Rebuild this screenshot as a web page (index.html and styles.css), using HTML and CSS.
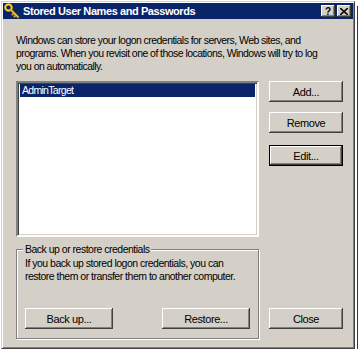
FILE: index.html
```html
<!DOCTYPE html>
<html lang="en">

<head>
    <meta charset="UTF-8">
    <meta name="viewport" content="width=device-width, initial-scale=1.0">
    <link rel="stylesheet" href="styles.css">
    <title>Stored User Names and Passwords</title>
</head>

<body>
    <div class="window">
        <div class="titlebar">
            <svg class="key" width="16" height="16" viewBox="0 0 16 16">
                <circle cx="4.5" cy="4.5" r="3.2" fill="none" stroke="#c89a10" stroke-width="2.2" />
                <circle cx="4.5" cy="4.5" r="3.2" fill="none" stroke="#f7d64a" stroke-width="1.2" />
                <path d="M6.8 6.8 L14 14 M10 10 L8.6 11.4 M12 12 L10.6 13.4" stroke="#d4a514" stroke-width="2" stroke-linecap="square" />
                <path d="M6.8 6.8 L14 14" stroke="#f7d64a" stroke-width="0.9" />
            </svg>
            <span class="title">Stored User Names and Passwords</span>
            <div class="caption-btns">
                <span class="cap-btn">?</span>
                <span class="cap-btn">
                    <svg width="8" height="7" viewBox="0 0 8 7">
                        <path d="M0 0 L8 7 M8 0 L0 7" stroke="#000" stroke-width="1.6" />
                    </svg>
                </span>
            </div>
        </div>

        <div class="content">
            <p class="intro">Windows can store your logon credentials for servers, Web sites, and<br>
                programs. When you revisit one of those locations, Windows will try to log<br>
                you on automatically.</p>

            <div class="main">
                <div class="left">
                    <div class="listbox">
                        <div class="item selected">AdminTarget</div>
                    </div>

                    <div class="group">
                        <span class="legend">Back up or restore credentials</span>
                        <p class="group-text">If you back up stored logon credentials, you can<br>
                            restore them or transfer them to another computer.</p>
                        <div class="group-btns">
                            <button class="btn">Back up...</button>
                            <button class="btn">Restore...</button>
                        </div>
                    </div>
                </div>

                <div class="right">
                    <button class="btn">Add...</button>
                    <button class="btn">Remove</button>
                    <button class="btn default">Edit...</button>
                    <button class="btn close">Close</button>
                </div>
            </div>
        </div>
    </div>
</body>

</html>
```

FILE: styles.css
```css
body {
    margin: 0;
    background: #ffffff;
    font-family: "Liberation Sans", Arial, sans-serif;
    font-size: 10.5px;
    color: #000000;
}

.window {
    width: 350px;
    height: 344px;
    margin: 1px 0 0 1px;
    padding: 1px;
    background: #d4d0c8;
    border: 1px solid #404040;
    border-top-color: #d4d0c8;
    border-left-color: #d4d0c8;
    box-shadow: inset 1px 1px #ffffff, inset -1px -1px #808080, 3px 3px 0 -1px #ffffff, 4px 4px 0 -1px #3a3a3a;
    display: flex;
    flex-direction: column;
}

.titlebar {
    height: 16px;
    background: #0a246a;
    display: flex;
    align-items: center;
    padding: 0 2px 0 1px;
    color: #ffffff;
}

.key {
    flex: none;
    margin-right: 3px;
}

.title {
    font-weight: bold;
    font-size: 11px;
    flex: 1;
    letter-spacing: -0.42px;
}

.caption-btns {
    display: flex;
    gap: 2px;
}

.cap-btn {
    width: 14px;
    height: 12px;
    background: #d4d0c8;
    color: #000000;
    font-weight: bold;
    font-size: 10px;
    display: flex;
    align-items: center;
    justify-content: center;
    box-shadow: inset -1px -1px #404040, inset 1px 1px #ffffff, inset -2px -2px #808080;
}

.content {
    flex: 1;
    display: flex;
    flex-direction: column;
    padding: 15px 10px 0 13px;
}

.intro {
    margin: 0;
    line-height: 13px;
    white-space: nowrap;
    letter-spacing: -0.55px;
}

.main {
    flex: 1;
    display: flex;
    gap: 10px;
    margin-top: 8px;
}

.left {
    width: 244px;
    display: flex;
    flex-direction: column;
    padding-bottom: 8px;
}

.listbox {
    height: 150px;
    background: #ffffff;
    border: 2px solid;
    border-color: #808080 #ffffff #ffffff #808080;
    box-shadow: inset 1px 1px #404040, inset -1px -1px #d4d0c8;
    padding: 1px 2px;
}

.item {
    height: 13px;
    line-height: 13px;
    padding-left: 2px;
    letter-spacing: -0.7px;
}

.item.selected {
    background: #0a246a;
    color: #ffffff;
}

.group {
    position: relative;
    margin-top: 12px;
    flex: 1;
    border: 1px solid #808080;
    box-shadow: inset 1px 1px #ffffff, 1px 1px #ffffff;
    padding: 7px 8px 9px 8px;
    display: flex;
    flex-direction: column;
}

.legend {
    position: absolute;
    top: -7px;
    left: 6px;
    padding: 0 2px;
    background: #d4d0c8;
    letter-spacing: -0.5px;
}

.group-text {
    margin: 0;
    line-height: 13px;
    white-space: nowrap;
    letter-spacing: -0.5px;
}

.group-btns {
    margin-top: auto;
    display: flex;
    justify-content: space-between;
}

.right {
    display: flex;
    flex-direction: column;
    gap: 10px;
    padding-bottom: 18px;
}

.btn {
    width: 74px;
    height: 21px;
    padding: 0;
    border: 0;
    background: #d4d0c8;
    font-family: "Liberation Sans", Arial, sans-serif;
    font-size: 11px;
    color: #000000;
    letter-spacing: -0.4px;
    box-shadow: inset -1px -1px #404040, inset 1px 1px #ffffff, inset -2px -2px #808080;
}

.group-btns .btn {
    width: 88px;
}

.btn.default {
    margin-top: 2px;
    border: 1px solid #000000;
}

.btn.close {
    margin-top: auto;
}
```
